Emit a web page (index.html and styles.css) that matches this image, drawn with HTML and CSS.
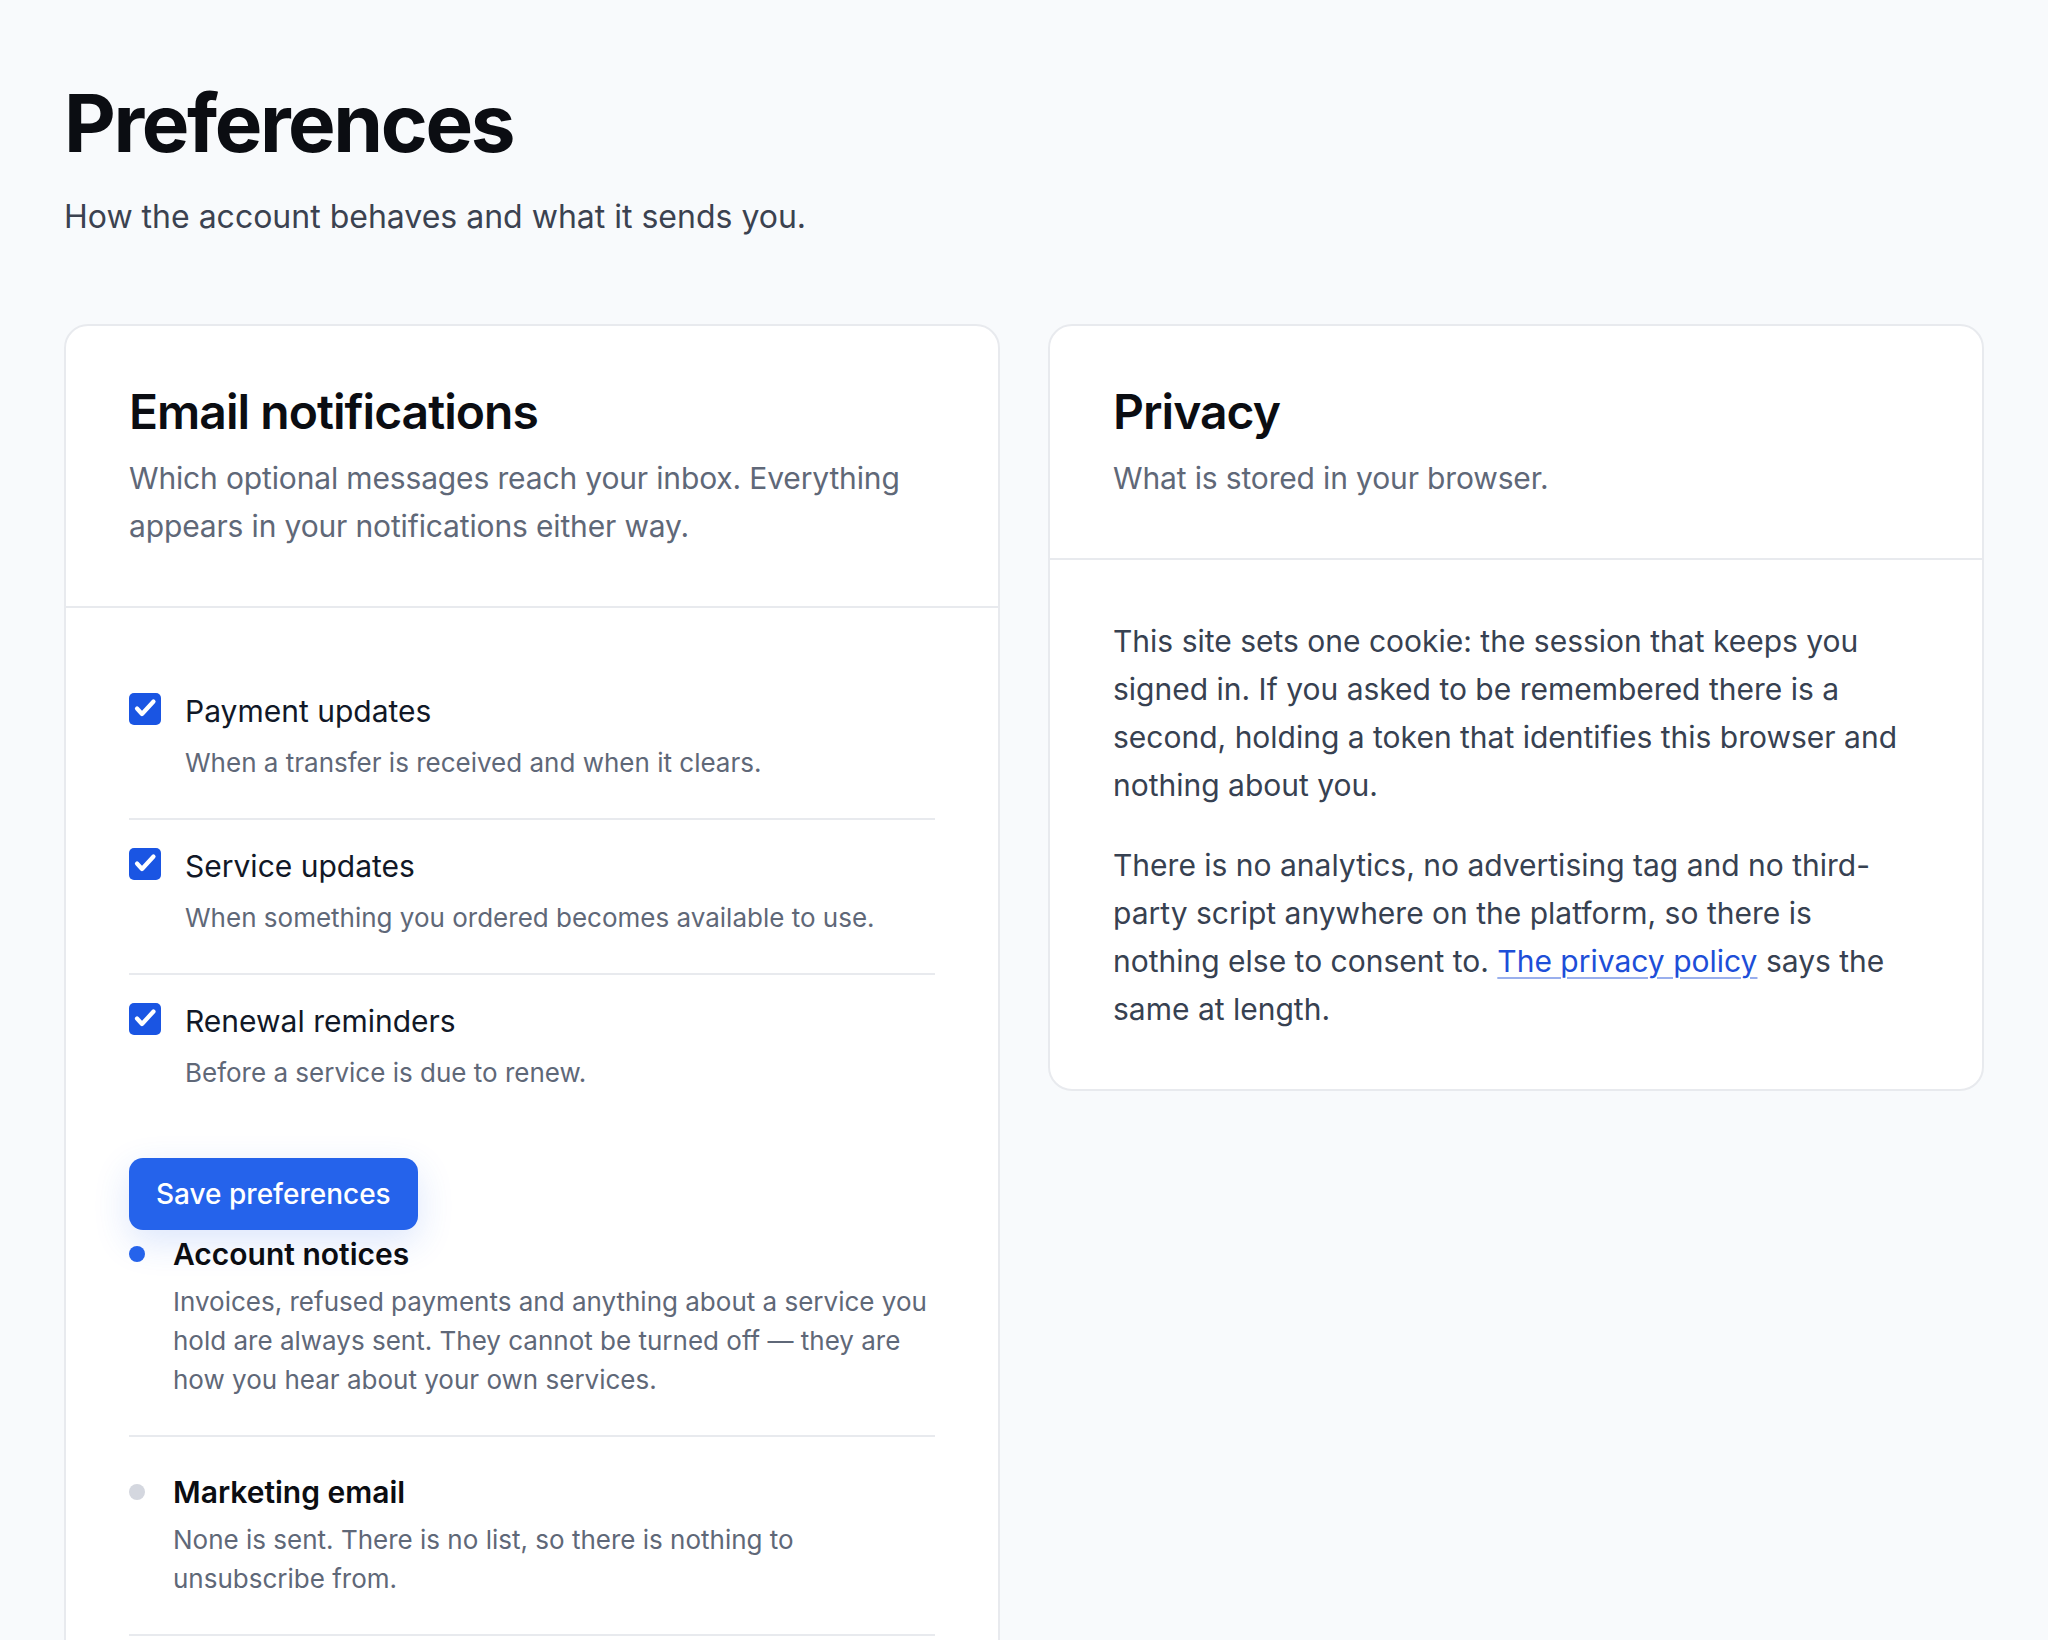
FILE: index.html
```html
<!DOCTYPE html>
<html lang="en">
<head>
<meta charset="utf-8">
<title>Preferences</title>
<link rel="stylesheet" href="styles.css">
</head>
<body>
<main class="page">
  <header class="page-head">
    <h1 class="page-title">Preferences</h1>
    <p class="page-lede">How the account behaves and what it sends you.</p>
  </header>

  <div class="cards">
    <section class="card">
      <div class="card-head">
        <h2 class="card-title">Email notifications</h2>
        <p class="card-sub">Which optional messages reach your inbox. Everything appears in your notifications either way.</p>
      </div>
      <form class="card-body">
        <div class="opts">
          <label class="opt">
            <span class="opt-box"><svg viewBox="0 0 32 32" width="32" height="32"><path d="M8 15.5 L13 21 L24.5 8.5" fill="none" stroke="#fff" stroke-width="4.2" stroke-linecap="round" stroke-linejoin="round"/></svg></span>
            <span class="opt-text">
              <span class="opt-label">Payment updates</span>
              <span class="opt-desc">When a transfer is received and when it clears.</span>
            </span>
          </label>
          <label class="opt">
            <span class="opt-box"><svg viewBox="0 0 32 32" width="32" height="32"><path d="M8 15.5 L13 21 L24.5 8.5" fill="none" stroke="#fff" stroke-width="4.2" stroke-linecap="round" stroke-linejoin="round"/></svg></span>
            <span class="opt-text">
              <span class="opt-label">Service updates</span>
              <span class="opt-desc">When something you ordered becomes available to use.</span>
            </span>
          </label>
          <label class="opt">
            <span class="opt-box"><svg viewBox="0 0 32 32" width="32" height="32"><path d="M8 15.5 L13 21 L24.5 8.5" fill="none" stroke="#fff" stroke-width="4.2" stroke-linecap="round" stroke-linejoin="round"/></svg></span>
            <span class="opt-text">
              <span class="opt-label">Renewal reminders</span>
              <span class="opt-desc">Before a service is due to renew.</span>
            </span>
          </label>
        </div>
        <button type="button" class="btn">Save preferences</button>
        <ul class="notes">
          <li class="note">
            <span class="dot dot-on"></span>
            <div class="note-text">
              <div class="note-title">Account notices</div>
              <div class="note-desc">Invoices, refused payments and anything about a service you hold are always sent. They cannot be turned off — they are how you hear about your own services.</div>
            </div>
          </li>
          <li class="note">
            <span class="dot dot-off"></span>
            <div class="note-text">
              <div class="note-title">Marketing email</div>
              <div class="note-desc">None is sent. There is no list, so there is nothing to unsubscribe from.</div>
            </div>
          </li>
        </ul>
      </form>
    </section>

    <section class="card">
      <div class="card-head">
        <h2 class="card-title">Privacy</h2>
        <p class="card-sub">What is stored in your browser.</p>
      </div>
      <div class="card-body prose">
        <p>This site sets one cookie: the session that keeps you signed in. If you asked to be remembered there is a second, holding a token that identifies this browser and nothing about you.</p>
        <p>There is no analytics, no advertising tag and no third-party script anywhere on the platform, so there is nothing else to consent to. <a href="#" class="link">The privacy policy</a> says the same at length.</p>
      </div>
    </section>
  </div>
</main>
</body>
</html>
```

FILE: styles.css
```css
* { box-sizing: border-box; }

body {
  margin: 0;
  background: #f8fafc;
  font-family: Inter, "Noto Sans", "Liberation Sans", sans-serif;
  color: #111827;
}

.page {
  padding: 79px 64px 64px;
}

.page-title {
  margin: 0;
  font-size: 80px;
  line-height: 88px;
  font-weight: 700;
  letter-spacing: -0.03em;
  color: #0b0d12;
}

.page-lede {
  margin: 26px 0 0;
  font-size: 32px;
  line-height: 48px;
  color: #3b4250;
}

.cards {
  display: grid;
  grid-template-columns: 1fr 1fr;
  gap: 48px;
  margin-top: 83px;
  align-items: start;
}

.card {
  background: #fff;
  border: 2px solid #e8eaee;
  border-radius: 24px;
}

.card-head {
  padding: 57px 63px 56px;
  border-bottom: 2px solid #e8eaee;
}

.card-title {
  margin: 0;
  font-size: 48px;
  line-height: 57.6px;
  font-weight: 600;
  letter-spacing: -0.02em;
  color: #0b0d12;
}

.card-sub {
  margin: 13px 0 0;
  font-size: 30px;
  line-height: 48px;
  letter-spacing: -0.005em;
  color: #5f6878;
}

.card-body {
  padding: 57px 63px 56px;
}

/* checkbox options */
.opt {
  display: flex;
  gap: 24px;
  align-items: flex-start;
  padding: 24px 0 36px;
  border-bottom: 2px solid #e8eaee;
  cursor: pointer;
}

.opt:last-child {
  border-bottom: 0;
}

.opt-box {
  flex: none;
  width: 32px;
  height: 32px;
  margin-top: 4px;
  border-radius: 5px;
  background: #1a55e3;
  display: block;
}

.opt-box svg {
  display: block;
}

.opt-text {
  display: flex;
  flex-direction: column;
}

.opt-label {
  font-size: 30px;
  line-height: 45px;
  color: #111827;
}

.opt-desc {
  margin-top: 9px;
  font-size: 26px;
  line-height: 39px;
  color: #5f6878;
}

/* button */
.btn {
  margin-top: 30px;
  height: 72px;
  padding: 0 27px;
  border: 0;
  border-radius: 14px;
  background: #2563eb;
  color: #fff;
  font-family: inherit;
  font-size: 28px;
  font-weight: 500;
  box-shadow: 0 12px 36px rgba(37, 99, 235, 0.16);
  cursor: pointer;
}

/* always-on notes */
.notes {
  list-style: none;
  margin: 2px 0 0;
  padding: 0;
}

.note {
  display: flex;
  gap: 28px;
  align-items: flex-start;
  padding: 33px 0 36px;
  border-bottom: 2px solid #e8eaee;
}

.note:first-child {
  padding-top: 0;
}

.dot {
  flex: none;
  width: 16px;
  height: 16px;
  margin-top: 14px;
  border-radius: 50%;
}

.dot-on { background: #2563eb; }
.dot-off { background: #d4d7df; }

.note-title {
  font-size: 30px;
  line-height: 45px;
  font-weight: 600;
  color: #0b0d12;
}

.note-desc {
  margin-top: 5px;
  font-size: 26px;
  line-height: 39px;
  color: #5f6878;
}

/* privacy prose */
.prose p {
  margin: 0 0 32px;
  font-size: 30px;
  line-height: 48px;
  color: #374151;
}

.prose p:last-child {
  margin-bottom: 0;
}

.link {
  color: #1d4ed8;
  text-decoration: underline;
  text-decoration-color: rgba(29, 78, 216, 0.45);
  text-decoration-thickness: 2px;
  text-underline-offset: 5px;
}
```
